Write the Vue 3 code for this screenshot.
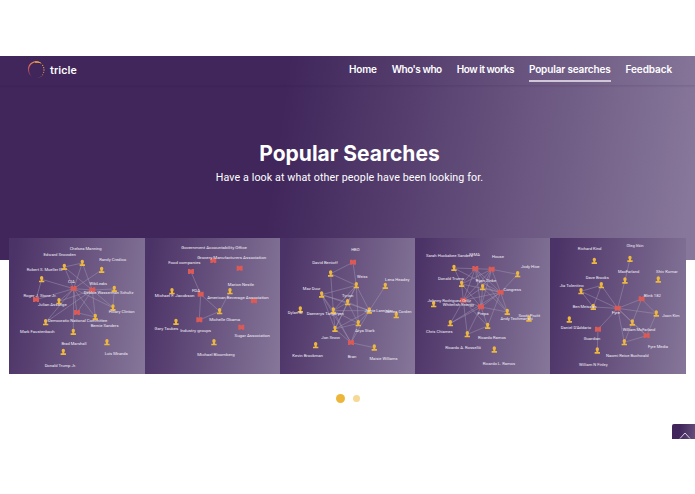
<script setup>
import { ref } from 'vue'

// spacing: tracking of each menu entry, in px
const menu = [
  { name: "Home", spacing: -0.2 },
  { name: "Who's who", spacing: -0.45 },
  { name: "How it works", spacing: -0.45 },
  { name: "Popular searches", spacing: -0.15 },
  { name: "Feedback", spacing: -0.1 }
]
const active = ref("Popular searches")
const page = ref(0)

// nodes: [type, x, y]   p = person, o = organisation
// links: [from, to]     indexes in nodes
// labels: [text, center x, center y, width]
const graphs = [
  {
    box: "28 18 406 407",
    nodes: [
      ["p", 194, 105], ["p", 248, 93], ["p", 306, 114], ["p", 126, 142], ["p", 344, 171], ["p", 178, 208],
      ["p", 340, 227], ["p", 287, 255], ["p", 138, 271], ["p", 221, 300], ["p", 322, 331], ["p", 191, 360],
      ["o", 222, 170], ["o", 278, 174], ["o", 109, 203], ["o", 232, 242]
    ],
    links: [[12, 0], [12, 1], [12, 2], [12, 3], [12, 13], [12, 14], [12, 5], [12, 6], [12, 7], [12, 8], [12, 9], [12, 15],
      [13, 0], [13, 1], [13, 4], [13, 6], [13, 7], [13, 15], [13, 5], [14, 3], [0, 1], [15, 7], [4, 6], [8, 13]],
    labels: [
      ["Chelsea Manning", 258, 50, 96], ["Edward Snowden", 180, 67, 97], ["Randy Credico", 339, 82, 81],
      ["Robert S. Mueller III", 135, 112, 107], ["CIA", 215, 149, 20], ["WikiLeaks", 296, 155, 53],
      ["Debbie Wasserman Schultz", 327, 181, 149], ["Roger J. Stone Jr.", 121, 190, 99], ["Julian Assange", 158, 218, 86],
      ["Hillary Clinton", 366, 239, 77], ["Democratic National Committee", 234, 264, 178], ["Bernie Sanders", 315, 279, 84],
      ["Mark Faustenbach", 113, 297, 104], ["Brad Marshall", 223, 334, 75], ["Luis Miranda", 350, 365, 69],
      ["Donald Trump Jr.", 182, 399, 94]
    ]
  },
  {
    box: "14 18 406 407",
    nodes: [
      ["o", 219, 86], ["o", 298, 109], ["o", 152, 119], ["p", 95, 178], ["o", 181, 187], ["p", 269, 178],
      ["o", 341, 207], ["p", 238, 238], ["o", 177, 264], ["p", 107, 270], ["o", 303, 286], ["p", 221, 331]
    ],
    links: [[2, 4], [4, 7], [4, 8], [8, 7], [5, 7]],
    labels: [
      ["Government Accountability Office", 221, 48, 197], ["Grocery Manufacturers Association", 274, 78, 207],
      ["Food companies", 132, 91, 97], ["Marion Nestle", 302, 159, 79], ["FDA", 167, 177, 24],
      ["Michael F. Jacobson", 103, 190, 119], ["American Beverage Association", 293, 196, 185],
      ["Michelle Obama", 253, 262, 93], ["Gary Taubes", 78, 290, 71], ["Industry groups", 166, 294, 93],
      ["Sugar Association", 336, 310, 106], ["Michael Bloomberg", 227, 368, 112]
    ]
  },
  {
    box: "15 18 406 407",
    nodes: [
      ["o", 234, 91], ["p", 167, 125], ["p", 244, 160], ["p", 331, 162], ["p", 140, 188], ["p", 218, 211],
      ["p", 76, 233], ["p", 175, 236], ["p", 283, 236], ["p", 364, 250], ["p", 250, 274], ["p", 180, 291],
      ["o", 228, 332], ["p", 122, 340], ["p", 298, 347]
    ],
    links: [[0, 1], [0, 2], [1, 2], [1, 7], [2, 4], [2, 5], [2, 7], [2, 8], [2, 10], [2, 11], [3, 8], [4, 5], [4, 8],
      [4, 7], [4, 11], [4, 12], [5, 7], [5, 8], [5, 10], [5, 11], [7, 8], [7, 10], [7, 11], [7, 12], [8, 10], [8, 11],
      [8, 12], [10, 11], [10, 12], [11, 12], [12, 14]],
    labels: [
      ["HBO", 241, 52, 25], ["David Benioff", 150, 91, 77], ["Weiss", 262, 133, 32], ["Lena Headey", 367, 142, 73],
      ["Maz Duur", 110, 169, 53], ["Tyrion", 218, 191, 34], ["Dylan B.", 61, 240, 45], ["Daenerys Targaryen", 151, 244, 112],
      ["Jamie Lannister", 311, 236, 85], ["James Corden", 370, 239, 80], ["Arya Stark", 270, 296, 58],
      ["Jon Snow", 167, 317, 56], ["Kevin Brockman", 98, 370, 92], ["Bran", 231, 374, 26], ["Maisie Williams", 326, 380, 84]
    ]
  },
  {
    box: "15 18 406 407",
    nodes: [
      ["p", 132, 108], ["o", 196, 110], ["o", 245, 112], ["p", 323, 127], ["p", 155, 156], ["p", 218, 166],
      ["o", 272, 181], ["o", 160, 205], ["p", 71, 217], ["o", 213, 225], ["p", 292, 240], ["p", 357, 260],
      ["p", 121, 274], ["p", 233, 282], ["p", 172, 307], ["p", 253, 353]
    ],
    links: [[0, 1], [0, 4], [0, 6], [1, 2], [1, 4], [1, 5], [1, 6], [1, 7], [1, 9], [1, 10], [2, 3], [2, 4], [2, 5],
      [2, 6], [2, 7], [2, 9], [3, 6], [4, 6], [4, 7], [4, 9], [5, 6], [5, 7], [5, 9], [6, 9], [6, 10], [6, 13], [6, 7],
      [7, 9], [7, 13], [7, 14], [9, 10], [9, 12], [9, 13], [9, 14], [12, 7], [13, 14], [5, 10], [6, 12]],
    labels: [
      ["Sarah Huckabee Sanders", 118, 71, 140], ["FEMA", 194, 69, 32], ["House", 264, 73, 36], ["Jody Hice", 361, 104, 56],
      ["Donald Trump", 123, 139, 78], ["Ryan Zinke", 228, 147, 61], ["Congress", 307, 173, 53],
      ["Johnny Rodriguez Ortiz", 118, 205, 131], ["Whitefish Energy", 145, 218, 94], ["Prepa", 219, 245, 33],
      ["Andy Techmanski", 320, 259, 97], ["Scott Pruitt", 358, 251, 65], ["Chris Chiames", 88, 299, 80],
      ["Ricardo Ramos", 246, 315, 84], ["Ricardo A. Rosselló", 159, 345, 107], ["Ricardo L. Ramos", 267, 394, 97]
    ]
  },
  {
    box: "16 18 406 407",
    nodes: [
      ["p", 149, 87], ["p", 256, 81], ["p", 241, 146], ["p", 341, 143], ["p", 170, 160], ["p", 109, 178],
      ["o", 291, 201], ["p", 146, 225], ["o", 219, 229], ["p", 335, 245], ["p", 74, 263], ["p", 263, 272],
      ["o", 160, 292], ["o", 306, 311], ["p", 239, 331], ["p", 158, 356]
    ],
    links: [[1, 2], [2, 8], [4, 5], [4, 7], [4, 8], [5, 7], [5, 8], [7, 8], [6, 8], [6, 9], [6, 11], [8, 9], [8, 11],
      [8, 12], [8, 13], [8, 14], [9, 13], [11, 13], [11, 14], [13, 14], [12, 15]],
    labels: [
      ["Richard Kind", 135, 51, 71], ["Oleg Itkin", 271, 42, 51], ["MacFarland", 252, 120, 64], ["Shiv Kumar", 367, 120, 65],
      ["Dave Brooks", 158, 136, 69], ["Jia Tolentino", 81, 161, 72], ["Blink 182", 323, 191, 52], ["Ben Meisalas", 120, 224, 71],
      ["Fyre", 214, 241, 25], ["Joon Kim", 379, 251, 52], ["Daniel D'Addario", 94, 286, 91],
      ["William McFarland", 283, 291, 98], ["Guardian", 142, 318, 50], ["Fyre Media", 340, 342, 60],
      ["Naomi Reice Buchwald", 248, 371, 128], ["William N Finley", 146, 396, 86]
    ]
  }
]
</script>

<template>
  <div class="page">
    <section class="hero">
      <header>
        <a class="brand">
          <svg class="logo" viewBox="0 0 54 54">
            <defs>
              <linearGradient id="ring" x1="0" y1="1" x2="0.8" y2="0">
                <stop offset="0.1" stop-color="#8a3560" />
                <stop offset="0.5" stop-color="#dd6659" />
                <stop offset="1" stop-color="#f5b53d" />
              </linearGradient>
            </defs>
            <path d="M16 49 C-4 36 -2 4 26 1 C34 0 40 3 44 8 C38 4 31 3 26 4 C4 7 0 34 16 49Z" fill="url(#ring)" />
            <path d="M24 2 C33 0 40 3 44 8 C38 5 31 5 25 6Z" fill="#f0a544" />
            <g fill="#e8a14b">
              <circle cx="47" cy="13" r="2.1" /><circle cx="50" cy="20" r="2" />
              <circle cx="51" cy="27" r="1.9" /><circle cx="50" cy="34" r="1.7" />
              <circle cx="47" cy="41" r="1.5" /><circle cx="42" cy="46" r="1.1" /><circle cx="36" cy="50" r="0.8" />
            </g>
          </svg>
          <span>tricle</span>
        </a>
        <nav>
          <a v-for="item in menu" :key="item.name" :class="{ active: item.name === active }"
             :style="{ letterSpacing: item.spacing + 'px' }" @click="active = item.name">{{ item.name }}</a>
        </nav>
      </header>
      <h1>Popular Searches</h1>
      <p>Have a look at what other people have been looking for.</p>
    </section>

    <section class="cards">
      <svg v-for="(g, i) in graphs" :key="i" class="card" :viewBox="g.box" preserveAspectRatio="none">
        <g class="links">
          <line v-for="(l, n) in g.links" :key="n"
                :x1="g.nodes[l[0]][1]" :y1="g.nodes[l[0]][2]" :x2="g.nodes[l[1]][1]" :y2="g.nodes[l[1]][2]" />
        </g>
        <g v-for="(n, k) in g.nodes" :key="k" :transform="`translate(${n[1]} ${n[2]})`">
          <path v-if="n[0] === 'p'" class="person" d="M-5 -5 a5 5 0 0 1 10 0 q0 4 -2 6 v3 h5 v5 h-16 v-5 h5 v-3 q-2 -2 -2 -6z" />
          <path v-else class="org" d="M-9 -8 h7 v2 h4 v-2 h7 v15 h-7 v-2 h-4 v2 h-7z" />
        </g>
        <text v-for="t in g.labels" :key="t[0]" :x="t[1]" :y="t[2] + 4.5" :textLength="t[3]" lengthAdjust="spacingAndGlyphs">{{ t[0] }}</text>
      </svg>
    </section>

    <div class="dots">
      <span v-for="n in 2" :key="n" :class="{ on: page === n - 1 }" @click="page = n - 1"></span>
    </div>

    <button class="top">
      <svg viewBox="0 0 12 7"><path d="M1 6.5 L6 1 L11 6.5" /></svg>
    </button>
  </div>
</template>

<style>
body {
  background: #fff;
}
</style>

<style scoped>
.page {
  position: relative;
  width: 695px;
  height: 383px;
  margin-top: 56px;
  overflow: hidden;
  font-family: Inter, "Open Sans", sans-serif;
  color: #fff;
}

.hero {
  height: 204px;
  background: linear-gradient(98deg, #40265b 40%, #87779a 98%);
  text-align: center;
}

header {
  display: flex;
  justify-content: space-between;
  box-sizing: border-box;
  height: 29px;
  padding: 0 23px 0 26.5px;
  box-shadow: 0 1px 2px rgba(40, 20, 60, 0.15);
}

.brand {
  display: flex;
  align-items: center;
  gap: 5.5px;
  height: 28px;
  font: 500 11.5px Roboto, sans-serif;
  letter-spacing: 0.15px;
}

.logo {
  width: 18px;
  height: 18px;
}

.brand span {
  margin-top: -1px;
}

nav {
  display: flex;
  gap: 15px;
}

nav a {
  box-sizing: border-box;
  height: 26px;
  font-size: 10px;
  font-weight: 600;
  line-height: 27px;
  white-space: nowrap;
  cursor: pointer;
}

nav a.active {
  border-bottom: 2px solid #cfc6d8;
}

h1 {
  margin: 55px 0 0;
  padding-left: 4px;
  font-size: 21px;
  font-weight: 700;
  line-height: 28px;
}

p {
  margin: 2px 0 0;
  padding-left: 4px;
  font: 400 10.7px/15px Roboto, sans-serif;
  letter-spacing: 0.1px;
}

.cards {
  display: flex;
  position: relative;
  width: 676.4px;
  height: 135.7px;
  margin: -21.8px 0 0 9.3px;
}

.card {
  flex: 1;
  min-width: 0;
  height: 100%;
  background: linear-gradient(98deg, #4c3367 5%, #857598 98%);
}

.card text {
  fill: #f1edf5;
  font: 400 12.5px Roboto, sans-serif;
  text-anchor: middle;
}

.links line {
  stroke: #a99eb8;
  stroke-opacity: 0.65;
  stroke-width: 2;
}

.person {
  fill: #edb83f;
}

.org {
  fill: #dc5a56;
}

.dots {
  display: flex;
  align-items: center;
  gap: 8px;
  height: 10px;
  margin: 19.5px 0 0 335.5px;
}

.dots span {
  width: 7px;
  height: 7px;
  border-radius: 50%;
  background: #f5d994;
}

.dots .on {
  width: 9px;
  height: 9px;
  background: #edb63b;
}

.top {
  position: absolute;
  right: -2px;
  bottom: -9px;
  width: 25px;
  height: 24px;
  padding: 0;
  border: 0;
  border-radius: 2px;
  background: linear-gradient(98deg, #40265b 30%, #6d5883);
}

.top svg {
  display: block;
  width: 12px;
  height: 7px;
  margin: -1px auto 0;
  fill: none;
  stroke: #d9d1e2;
  stroke-width: 1;
}
</style>
